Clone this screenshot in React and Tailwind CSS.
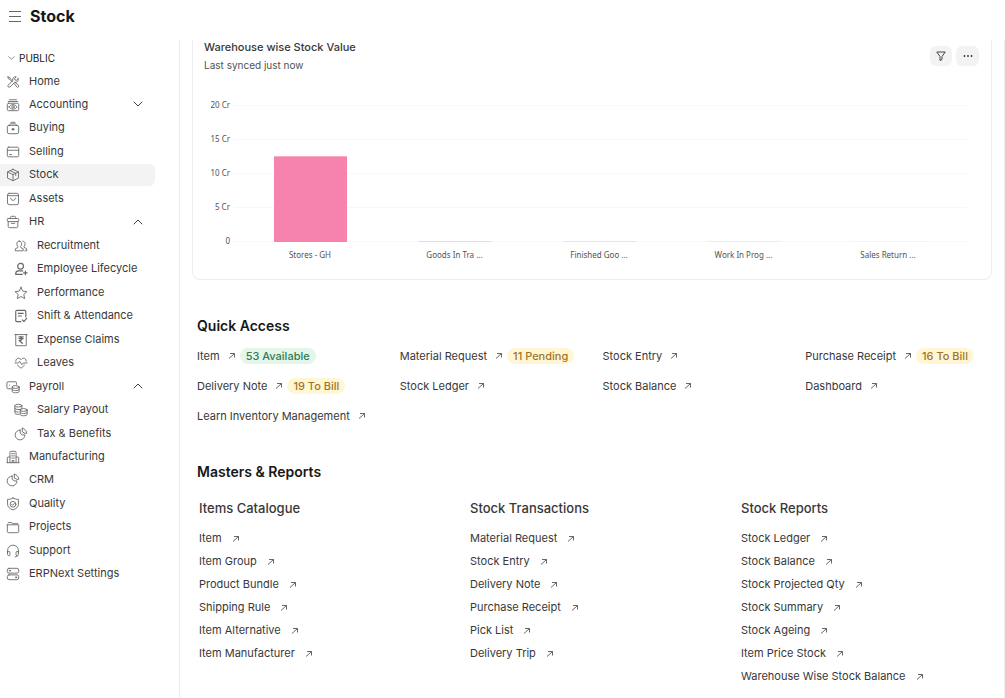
import React, { useState } from "react";

const icons = {
  home: (
    <>
      <path d="M2.2 2.2 4 2.6l.8 1.6 2.6 2.6M2.2 2.2l.4 1.9 1.7.9 2.5 2.6" />
      <path d="M9.4 9.8 12.3 13.6a1.3 1.3 0 0 0 1.9-1.9L10.4 8.6" />
      <path d="M13.9 4.2 12 6 10.2 5.7 9.9 4l1.9-1.9a3.3 3.3 0 0 0-4 4.3L2.4 11.6a1.5 1.5 0 0 0 2.1 2.1l5.4-5.3a3.3 3.3 0 0 0 4-4.2Z" />
    </>
  ),
  accounting: (
    <>
      <rect x="1.5" y="6" width="13" height="8.5" rx="1.5" />
      <path d="M2.5 4h11M4 2h8" />
      <circle cx="8" cy="10.2" r="1.4" />
      <path d="M3.6 10.2c1-1.8 2.5-2.6 4.4-2.6s3.4.8 4.4 2.6c-1 1.8-2.5 2.6-4.4 2.6s-3.4-.8-4.4-2.6Z" />
    </>
  ),
  buying: (
    <>
      <rect x="1.5" y="5" width="13" height="9.5" rx="2" />
      <path d="M4 5c0-1.2.8-1.8 1.8-1.8h4.4c1 0 1.8.6 1.8 1.8M5.8 1.5h4.4" />
      <circle cx="8" cy="9.5" r="1" fill="currentColor" />
    </>
  ),
  selling: (
    <>
      <rect x="1.5" y="2.5" width="13" height="11" rx="1.5" />
      <path d="M1.5 6h13M4 11h2.5" />
    </>
  ),
  stock: (
    <>
      <path d="M8 1.5 14.3 4.5v7L8 14.5 1.7 11.5v-7L8 1.5Z" />
      <path d="M1.7 4.5 8 7.5l6.3-3M8 7.5v7M4.8 3l6.3 3v2.5" />
    </>
  ),
  assets: (
    <>
      <rect x="1.7" y="1.5" width="12.6" height="13" rx="2" />
      <path d="M2 4.2h12M5.2 7c.2 1.5 1.3 2.5 2.8 2.5s2.6-1 2.8-2.5" />
    </>
  ),
  hr: (
    <>
      <rect x="1.5" y="4" width="13" height="3.5" rx="1" />
      <path d="M2.5 7.5V13A1.5 1.5 0 0 0 4 14.500h8a1.500 1.500 0 0 0 1.500-1.500V7.500M5 4V2.700c0-.7.5-1.200 1.200-1.200h3.600c.7 0 1.200.5 1.200 1.200V4M6 9.500h4" />
    </>
  ),
  recruitment: (
    <>
      <path d="M6 2.500c-1.700 0-2.700 1.200-2.700 2.800 0 1.400.4 2.500 1 3.200v1.300L1.500 11.200v2.300h9v-2.300L7.700 9.800V8.500c.6-.7 1-1.800 1-3.200 0-1.600-1-2.800-2.700-2.800Z" />
      <path d="M10 2.500c1.700 0 2.700 1.200 2.700 2.800 0 1.400-.6 2.200-1.200 2.900v1.300l3 1.700v2.300h-2" />
    </>
  ),
  lifecycle: (
    <g strokeWidth="1.3">
      <circle cx="7.500" cy="4.800" r="3.300" />
      <path d="M10 10.200H5.500c-2.200 0-3.500 1.300-3.500 3v1h7.500M13 10.500v4M11 12.500h4" />
    </g>
  ),
  performance: (
    <path d="m8 1.500 2 4.400 4.800.5-3.600 3.200 1 4.800L8 12l-4.200 2.400 1-4.800L1.200 6.400 6 5.900l2-4.400Z" />
  ),
  shift: (
    <g strokeWidth="1.3">
      <path d="M13.500 9V3a1.500 1.500 0 0 0-1.500-1.500H3.500A1.500 1.500 0 0 0 2 3v10a1.500 1.500 0 0 0 1.500 1.500h4.300" />
      <path d="M5 5h5.500M5 8h3.500M9.500 12.500l1.800 1.800 3.200-3.600" />
    </g>
  ),
  expense: (
    <>
      <path d="M2 1.800v12.700h12V1.800M1 1.800h14" />
      <path
        d="M5.800 4.500h4.600M5.800 6.500h4.600M6 4.500c3.800 0 3.800 4.200 0 4.200l3.500 3"
        strokeWidth="1.500"
      />
    </>
  ),
  leaves: (
    <>
      <path d="M2 6c0-2 1.300-3.500 3-3.500 1.300 0 2.300.6 3 1.700.7-1.100 1.700-1.700 3-1.700 1.700 0 3 1.500 3 3.500M4 10.500l4 3.500 4-3.500" />
      <path d="M1 8h4l1.500-2L9 10l1.500-2H15" />
    </>
  ),
  payroll: (
    <>
      <path d="M6 10H2.500A1.500 1.500 0 0 1 1 8.500v-5A1.500 1.500 0 0 1 2.500 2h8A1.500 1.500 0 0 1 12 3.500V5M4 6h.2" />
      <ellipse cx="11" cy="8" rx="4" ry="1.600" />
      <path d="M7 8v5c0 .9 1.800 1.600 4 1.600s4-.7 4-1.600V8M7 10.500c0 .9 1.800 1.600 4 1.600s4-.7 4-1.600" />
    </>
  ),
  salary: (
    <>
      <ellipse cx="5" cy="3" rx="4" ry="1.600" />
      <path d="M1 3v8.500c0 .9 1.800 1.500 4 1.500h1M9 3v3M1 6c0 .8 1.800 1.500 4 1.500M1 9c0 .8 1.800 1.400 4 1.400M5 7.500c1.200 0 2.200-.1 3-.4" />
      <ellipse cx="11" cy="8" rx="4" ry="1.600" />
      <path d="M7 8v5c0 .9 1.800 1.600 4 1.600s4-.7 4-1.600V8M7 10.500c0 .9 1.800 1.600 4 1.600s4-.7 4-1.600" />
    </>
  ),
  pie: (
    <>
      <path d="M7 3.500A5.600 5.600 0 1 0 12.500 9H9.300L7 7V3.500Z" />
      <path d="M9.500 1.500v4.200l3 1.500h2A5.500 5.500 0 0 0 9.500 1.500Z" />
    </>
  ),
  manufacturing: (
    <>
      <path d="M4.500 14.500v-12a1 1 0 0 1 1-1h5a1 1 0 0 1 1 1v12M1 14.500h14M4.500 8h-2a1 1 0 0 0-1 1v5.500M11.500 8h2a1 1 0 0 1 1 1v5.500" />
      <path d="M6.500 4.200h1M8.700 4.200h1M6.500 6.700h1M8.700 6.700h1M6.500 9.200h1M8.700 9.200h1M7 14.500V12h2v2.500" />
    </>
  ),
  quality: (
    <>
      <path d="M8 1.200c1.800 1 3.800 1.500 6.200 1.500v5.600c0 3-2.500 5.200-6.200 6.500-3.700-1.300-6.200-3.500-6.200-6.500V2.700C4.200 2.700 6.200 2.200 8 1.200Z" />
      <circle cx="8" cy="8.300" r="3.300" />
      <path d="m6.500 8.400 1.100 1.100 2-2.200" />
    </>
  ),
  projects: (
    <>
      <path d="M1.500 5.500h13V13a1.500 1.500 0 0 1-1.500 1.500H3A1.500 1.500 0 0 1 1.500 13V5.500Z" />
      <path d="M2.500 3h4l1.500 1.200h5.500" />
    </>
  ),
  support: (
    <>
      <path d="M1.800 10V7.500a6.200 6.200 0 0 1 12.400 0V10" />
      <path d="M1.800 8.500h1.500c.8 0 1.200.5 1.200 1.200v2.600c0 .7-.4 1.200-1.200 1.200s-1.500-.7-1.500-1.500V8.500ZM14.200 8.500h-1.500c-.8 0-1.200.5-1.200 1.200v2.600c0 .7.400 1.200 1.200 1.200s1.500-.7 1.500-1.500V8.500ZM13 13.500c0 .8-.8 1.200-2.500 1.200" />
    </>
  ),
  settings: (
    <>
      <rect x="1.500" y="1.500" width="13" height="5.500" rx="2" />
      <rect x="1.500" y="9" width="13" height="5.500" rx="2" />
      <circle cx="4.500" cy="4.200" r=".7" />
      <circle cx="11.500" cy="11.800" r=".7" />
    </>
  ),
};

const menu = [
  { label: "Home", icon: "home" },
  { label: "Accounting", icon: "accounting", toggle: "down" },
  { label: "Buying", icon: "buying" },
  { label: "Selling", icon: "selling" },
  { label: "Stock", icon: "stock" },
  { label: "Assets", icon: "assets" },
  { label: "HR", icon: "hr", toggle: "up" },
  { label: "Recruitment", icon: "recruitment", child: true },
  { label: "Employee Lifecycle", icon: "lifecycle", child: true },
  { label: "Performance", icon: "performance", child: true },
  { label: "Shift & Attendance", icon: "shift", child: true },
  { label: "Expense Claims", icon: "expense", child: true },
  { label: "Leaves", icon: "leaves", child: true },
  { label: "Payroll", icon: "payroll", toggle: "up" },
  { label: "Salary Payout", icon: "salary", child: true },
  { label: "Tax & Benefits", icon: "pie", child: true },
  { label: "Manufacturing", icon: "manufacturing" },
  { label: "CRM", icon: "pie" },
  { label: "Quality", icon: "quality" },
  { label: "Projects", icon: "projects" },
  { label: "Support", icon: "support" },
  { label: "ERPNext Settings", icon: "settings" },
];

const shortcuts = [
  { label: "Item", badge: "53 Available", color: "green" },
  { label: "Material Request", badge: "11 Pending", color: "yellow" },
  { label: "Stock Entry" },
  { label: "Purchase Receipt", badge: "16 To Bill", color: "yellow" },
  { label: "Delivery Note", badge: "19 To Bill", color: "yellow" },
  { label: "Stock Ledger" },
  { label: "Stock Balance" },
  { label: "Dashboard" },
  { label: "Learn Inventory Management" },
];

const reports = [
  {
    title: "Items Catalogue",
    links: [
      "Item",
      "Item Group",
      "Product Bundle",
      "Shipping Rule",
      "Item Alternative",
      "Item Manufacturer",
    ],
  },
  {
    title: "Stock Transactions",
    links: [
      "Material Request",
      "Stock Entry",
      "Delivery Note",
      "Purchase Receipt",
      "Pick List",
      "Delivery Trip",
    ],
  },
  {
    title: "Stock Reports",
    links: [
      "Stock Ledger",
      "Stock Balance",
      "Stock Projected Qty",
      "Stock Summary",
      "Stock Ageing",
      "Item Price Stock",
      "Warehouse Wise Stock Balance",
    ],
  },
];

const bars = [
  { label: "Stores - GH", value: 12.6, fill: "#f683ae" },
  { label: "Goods In Tra ...", value: 0.1, fill: "#f9d3e0" },
  { label: "Finished Goo ...", value: 0.1, fill: "#fadde7" },
  { label: "Work In Prog ...", value: 0.1, fill: "#fae6ec" },
  { label: "Sales Return ...", value: 0.1, fill: "#faeff2" },
];

const Icon = ({ name }) => (
  <svg
    viewBox="0 0 16 16"
    className="mt-px size-[14px] shrink-0 text-[#666]"
    fill="none"
    stroke="currentColor"
    strokeWidth="1"
    strokeLinecap="round"
    strokeLinejoin="round"
    aria-hidden="true"
  >
    {icons[name]}
  </svg>
);

const Arrow = () => (
  <svg
    viewBox="0 0 8 8"
    className="size-2 shrink-0 text-[#555]"
    fill="none"
    stroke="currentColor"
    strokeWidth="0.9"
    aria-hidden="true"
  >
    <path d="M1 6.500 6.500 1.500M2 1.500h4.500V5.500" />
  </svg>
);

const Chevron = ({ up, className }) => (
  <svg
    viewBox="0 0 10 6"
    className={className}
    fill="none"
    stroke="currentColor"
    strokeLinecap="round"
    strokeLinejoin="round"
    aria-hidden="true"
  >
    <path d={up ? "M1 5l4-4 4 4" : "M1 1l4 4 4-4"} />
  </svg>
);

const Sidebar = () => {
  const [active, setActive] = useState("Stock");

  return (
    <aside className="w-[180px] shrink-0 border-r border-[#ededed] pt-[10px]">
      <button className="flex h-4 items-center gap-1 pl-2 text-[10px] text-[#171717]">
        <Chevron className="h-1 w-[7px] text-[#555]" />
        PUBLIC
      </button>
      <nav className="mt-1 mr-6 flex h-[515px] flex-col justify-between">
        {menu.map((item) => (
          <div
            key={item.label}
            className={`flex h-[22px] items-center rounded-r-md ${
              item.child ? "pl-[14px]" : "pl-[6px]"
            } ${active === item.label ? "bg-[#f3f3f3]" : ""}`}
          >
            <a
              href="#"
              className="flex flex-1 items-center gap-[9px] whitespace-nowrap"
              onClick={() => setActive(item.label)}
            >
              <Icon name={item.icon} />
              {item.label}
            </a>
            {item.toggle && (
              <button aria-label={`Toggle ${item.label}`} className="mr-3">
                <Chevron
                  up={item.toggle === "up"}
                  className="h-[6px] w-[10px] text-[#444]"
                />
              </button>
            )}
          </div>
        ))}
      </nav>
    </aside>
  );
};

const StockChart = () => (
  <svg
    viewBox="0 0 798 180"
    className="block w-full font-['Noto_Sans',sans-serif] text-[8px]"
    role="img"
    aria-label="Warehouse wise Stock Value"
  >
    {[20, 15, 10, 5, 0].map((tick, i) => (
      <g key={tick}>
        <line
          x1="41"
          x2="774"
          y1={10.5 + i * 34}
          y2={10.5 + i * 34}
          stroke="#f8f8f8"
        />
        <text x="37" y={13 + i * 34} textAnchor="end" fill="#525252">
          {tick ? `${tick} Cr` : "0"}
        </text>
      </g>
    ))}
    {bars.map((bar, i) => (
      <g key={bar.label}>
        <rect
          x={81 + i * 144.5}
          y={147 - Math.max(bar.value * 6.8, 1)}
          width="73"
          height={Math.max(bar.value * 6.8, 1)}
          fill={bar.fill}
        />
        <text x={117 + i * 144.5} y="163" textAnchor="middle" fill="#525252">
          {bar.label}
        </text>
      </g>
    ))}
  </svg>
);

const ChartCard = () => (
  <section className="rounded-b-lg border border-t-0 border-[#ededed] pb-1">
    <div className="flex h-[55px] justify-between pr-3 pl-[11px]">
      <div>
        <h2 className="font-medium">Warehouse wise Stock Value</h2>
        <p className="mt-[3px] text-[10px] text-[#525252]">
          Last synced just now
        </p>
      </div>
      <div className="mt-[6px] flex gap-1">
        <button
          aria-label="Filter"
          className="flex h-5 w-[22px] items-center justify-center rounded-md bg-[#f3f3f3]"
        >
          <svg viewBox="0 0 10 10" className="size-[10px]" fill="none" stroke="#444">
            <path d="M.8 1h8.400L6 5.500v3L4 9.500v-4L.8 1Z" strokeLinejoin="round" />
          </svg>
        </button>
        <button
          aria-label="More"
          className="flex h-5 w-[23px] items-center justify-center rounded-md bg-[#f3f3f3]"
        >
          <svg viewBox="0 0 10 10" className="size-[10px]" fill="#333">
            <circle cx="1.500" cy="5" r=".9" />
            <circle cx="5" cy="5" r=".9" />
            <circle cx="8.500" cy="5" r=".9" />
          </svg>
        </button>
      </div>
    </div>
    <StockChart />
  </section>
);

const Badge = ({ color, children }) => (
  <span
    className={`rounded-full px-[6px] leading-4 font-medium ${
      color === "green"
        ? "bg-[#e4f5e9] text-[#2f7d51]"
        : "bg-[#fff7d3] text-[#a3742a]"
    }`}
  >
    {children}
  </span>
);

const App = () => {
  return (
    <div className="flex min-h-screen flex-col bg-white font-['Inter',sans-serif] text-[11px] leading-[15px] text-[#383838]">
      <header className="flex h-10 items-center gap-[9px] pb-2 pl-[9px]">
        <button aria-label="Toggle sidebar">
          <svg viewBox="0 0 12 12" className="size-3" stroke="#666" fill="none">
            <path d="M0 1.500h12M0 6.500h12M0 11.500h12" />
          </svg>
        </button>
        <h1 className="text-base font-bold text-[#171717]">Stock</h1>
      </header>

      <div className="flex flex-1">
        <Sidebar />
        <main className="min-w-0 flex-1 border-r border-[#ededed] px-3">
          <ChartCard />

          {/* Shortcuts */}
          <section className="mt-9 pl-[5px]">
            <h2 className="text-sm leading-5 font-semibold text-[#171717]">
              Quick Access
            </h2>
            <div className="mt-3 grid grid-cols-4 gap-x-4 gap-y-[14px]">
              {shortcuts.map((item) => (
                <div
                  key={item.label}
                  className="flex h-4 items-center gap-1 whitespace-nowrap"
                >
                  <a href="#" className="flex items-center gap-2">
                    {item.label}
                    <Arrow />
                  </a>
                  {item.badge && <Badge color={item.color}>{item.badge}</Badge>}
                </div>
              ))}
            </div>
          </section>

          {/* Link cards */}
          <section className="mt-[38px] pl-[5px]">
            <h2 className="text-sm leading-5 font-semibold text-[#171717]">
              Masters & Reports
            </h2>
            <div className="mt-4 grid grid-cols-3 gap-x-5 pl-[2px]">
              {reports.map((card) => (
                <div key={card.title}>
                  <h3 className="text-[13px] leading-5 font-medium">
                    {card.title}
                  </h3>
                  <ul className="mt-[9px]">
                    {card.links.map((link) => (
                      <li key={link} className="flex h-[23px] items-center">
                        <a href="#" className="flex items-center gap-[10px]">
                          {link}
                          <Arrow />
                        </a>
                      </li>
                    ))}
                  </ul>
                </div>
              ))}
            </div>
          </section>
        </main>
      </div>
    </div>
  );
};

export default App;
